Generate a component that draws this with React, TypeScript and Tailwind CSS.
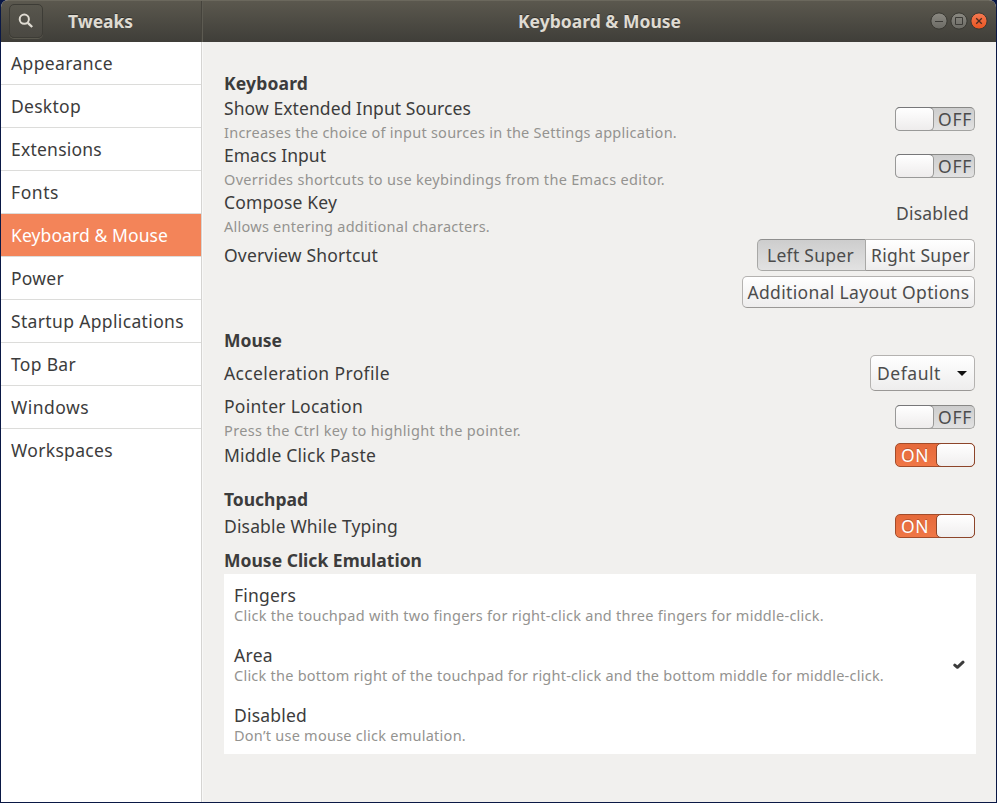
import { useLayoutEffect, useRef, useState } from "react";

/** Text run whose tracking is adjusted so that it fills `w` pixels. */
function Fit({ t, w, className = "" }: { t: string; w: number; className?: string }) {
  const ref = useRef<HTMLSpanElement>(null);
  const [spacing, setSpacing] = useState(0);
  useLayoutEffect(() => {
    if (!ref.current) return;
    const natural = ref.current.getBoundingClientRect().width;
    setSpacing((w - natural) / t.length);
  }, [t, w]);
  return (
    <span ref={ref} className={`inline-block whitespace-nowrap ${className}`} style={{ letterSpacing: spacing }}>
      {t}
    </span>
  );
}

const nav: [string, number][] = [
  ["Appearance", 102],
  ["Desktop", 70],
  ["Extensions", 91],
  ["Fonts", 48],
  ["Keyboard & Mouse", 157],
  ["Power", 53],
  ["Startup Applications", 173],
  ["Top Bar", 65],
  ["Windows", 78],
  ["Workspaces", 102],
];

function Switch({ on = false }: { on?: boolean }) {
  return on ? (
    <div className="flex h-6 w-20 shrink-0 rounded-[5px] border border-[#a34c2a] bg-linear-to-b from-[#e5693a] to-[#f07746]">
      <span className="flex w-10 items-center pt-px pl-[5px] text-[17.5px] leading-none text-white [text-shadow:0_-1px_#b9532c]">
        <Fit t="ON" w={28} />
      </span>
      <span className="-my-px -mr-px h-6 w-[39px] rounded-[5px] border border-[#8d452a] bg-linear-to-b from-white to-[#f0eeee]" />
    </div>
  ) : (
    <div className="flex h-6 w-20 shrink-0 rounded-[5px] border border-[#a3a3a1] border-t-[#888886] bg-linear-to-b from-[#cdcdcd] to-[#e2e2e2]">
      <span className="-my-px -ml-px h-6 w-[39px] rounded-[5px] border border-[#999998] border-t-[#777779] bg-linear-to-b from-white to-[#eeecec]" />
      <span className="flex flex-1 items-center pt-[2px] pl-[4px] text-[17.5px] leading-none text-[#4c4c4c]">
        <Fit t="OFF" w={34} />
      </span>
    </div>
  );
}

function Heading({ t, w, className }: { t: string; w: number; className: string }) {
  return (
    <h2 className={`flex items-center font-bold ${className}`}>
      <Fit t={t} w={w} />
    </h2>
  );
}

function Setting({ t, w, d, dw, children }: { t: string; w: number; d: string; dw: number; children: React.ReactNode }) {
  return (
    <div className="flex h-[47px] items-center justify-between">
      <div className="flex flex-col items-start pt-px">
        <Fit t={t} w={w} className="h-6 leading-6" />
        <Fit t={d} w={dw} className="h-[23px] text-[14.5px] leading-6 text-[#949390]" />
      </div>
      {children}
    </div>
  );
}

function Emulation({ t, w, d, dw, checked = false }: { t: string; w: number; d: string; dw: number; checked?: boolean }) {
  return (
    <div className="flex h-[60px] items-center justify-between pr-[11px] pl-[10px]">
      <div className="flex flex-col items-start pt-[2px]">
        <Fit t={t} w={w} className="h-[21px] leading-[21px]" />
        <Fit t={d} w={dw} className="h-[19px] text-[14.5px] leading-[19px] text-[#949390]" />
      </div>
      {checked && (
        <svg width="12" height="10" viewBox="0 0 12 10" className="mt-[2px]">
          <path d="M1.8 5.2 4.4 7.3 10 2.2" fill="none" stroke="#3c3c3c" strokeWidth="3" strokeLinecap="round" strokeLinejoin="round" />
        </svg>
      )}
    </div>
  );
}

const button = "flex items-center justify-center border bg-linear-to-b text-[#4c4c4c]";
const raised = "border-[#b4b2b0] border-b-[#9a9896] from-white to-[#eeeded]";
const pressed = "border-[#a8a8a6] border-t-[#8f8f8e] from-[#cdcdcd] to-[#e2e2e2]";

export default function App() {
  return (
    <div className="h-[803px] w-[997px] overflow-hidden bg-[#0a1845] px-px pb-px font-['Noto_Sans','Open_Sans',sans-serif] text-[17.5px] leading-6 text-[#3c3c3c]">
      <div className="flex h-full flex-col overflow-hidden rounded-t-[7px] bg-[#f1f0ee]">
        <header className="flex h-[42px] shrink-0 border-t border-[#6b685d] bg-linear-to-b from-[#5b584e] to-[#3f3e39] font-bold text-[#dfdbd2] [text-shadow:0_-1px_#33322e]">
          <div className="flex w-[201px] items-center border-r border-[#45433c] pb-[2px] pl-2">
            <button className="flex h-[34px] w-[34px] items-center justify-center rounded-[5px] border border-[#3d3c36] bg-linear-to-b from-[#58564d] to-[#4a4842] shadow-[0_1px_#5b594f]">
              <svg width="16" height="16" viewBox="0 0 16 16" fill="none" stroke="#dfdbd2">
                <circle cx="6.3" cy="6.2" r="4.6" strokeWidth="2" />
                <path d="m9.8 9.8 4.4 4.2" strokeWidth="2.4" />
              </svg>
            </button>
            <Fit t="Tweaks" w={65} className="ml-[25px]" />
          </div>
          <div className="flex flex-1 items-center border-l border-[#5d5b52] pb-[2px]">
            <div className="flex flex-1 justify-center">
              <Fit t="Keyboard & Mouse" w={163} />
            </div>
            <div className="-ml-[66px] flex gap-[2px] pr-[8px]">
              <svg width="18" height="18" viewBox="0 0 18 18">
                <defs>
                  <linearGradient id="gray" x2="0" y2="1"><stop stopColor="#8b8982" /><stop offset="1" stopColor="#6b6a64" /></linearGradient>
                  <linearGradient id="orange" x2="0" y2="1"><stop stopColor="#f47a53" /><stop offset="1" stopColor="#e95420" /></linearGradient>
                </defs>
                <circle cx="9" cy="9" r="8.1" fill="url(#gray)" stroke="#393832" />
                <path d="M5 9.5h8" stroke="#3c3b37" />
              </svg>
              <svg width="18" height="18" viewBox="0 0 18 18">
                <circle cx="9" cy="9" r="8.1" fill="url(#gray)" stroke="#393832" />
                <path d="M5.5 5.5h7v7h-7z" fill="none" stroke="#3c3b37" />
              </svg>
              <svg width="18" height="18" viewBox="0 0 18 18">
                <circle cx="9" cy="9" r="8.1" fill="url(#orange)" stroke="#393832" />
                <path d="m6.2 6.2 5.6 5.6m0-5.6-5.6 5.6" stroke="#4b2b20" strokeWidth="1.3" />
              </svg>
            </div>
          </div>
        </header>
        <div className="flex flex-1">
          <nav className="w-[201px] border-r border-[#d5d4d2] bg-white">
            {nav.map(([t, w], i) => (
              <div
                key={t}
                className={`flex items-center pl-[10px] ${i === 9 ? "h-[42px]" : "h-[43px] border-b border-[#dcdcda]"} ${i === 4 ? "bg-[#f38459] text-white" : ""}`}
              >
                <Fit t={t} w={w} />
              </div>
            ))}
          </nav>
          <main className="flex flex-1 flex-col border-l border-[#f8f8f7] pt-[29px] pr-[21px] pl-[21px]">
            <Heading t="Keyboard" w={84} className="h-6" />
            <Setting t="Show Extended Input Sources" w={247} d="Increases the choice of input sources in the Settings application." dw={453}>
              <Switch />
            </Setting>
            <Setting t="Emacs Input" w={102} d="Overrides shortcuts to use keybindings from the Emacs editor." dw={441}>
              <Switch />
            </Setting>
            <Setting t="Compose Key" w={113} d="Allows entering additional characters." dw={266}>
              <Fit t="Disabled" w={73} className="mr-[6px] text-[#4c4c4c]" />
            </Setting>
            <div className="mt-[3px] flex h-8 items-center justify-between">
              <Fit t="Overview Shortcut" w={154} />
              <div className="flex h-8">
                <button className={`${button} ${pressed} w-[109px] rounded-l-[5px] pr-[2px]`}>
                  <Fit t="Left Super" w={87} />
                </button>
                <button className={`${button} ${raised} w-[109px] rounded-r-[5px] border-l-0 pl-px`}>
                  <Fit t="Right Super" w={99} />
                </button>
              </div>
            </div>
            <button className={`${button} ${raised} mt-[5px] h-8 w-[233px] self-end rounded-[5px]`}>
              <Fit t="Additional Layout Options" w={222} />
            </button>
            <Heading t="Mouse" w={58} className="mt-5 h-6" />
            <div className="mt-[3px] flex h-9 items-center justify-between">
              <Fit t="Acceleration Profile" w={166} />
              <button className={`${button} ${raised} h-9 w-[105px] gap-[16px] rounded-[5px] pr-px`}>
                <Fit t="Default" w={64} />
                <svg width="10" height="5" viewBox="0 0 10 5"><path d="M0 0h10L5 5z" fill="#111" /></svg>
              </button>
            </div>
            <div className="mt-[2px] pb-px">
              <Setting t="Pointer Location" w={139} d="Press the Ctrl key to highlight the pointer." dw={297}>
                <Switch />
              </Setting>
            </div>
            <div className="mt-[2px] flex h-6 items-center justify-between">
              <Fit t="Middle Click Paste" w={152} />
              <Switch on />
            </div>
            <Heading t="Touchpad" w={84} className="mt-5 h-6" />
            <div className="mt-[3px] flex h-6 items-center justify-between">
              <Fit t="Disable While Typing" w={174} />
              <Switch on />
            </div>
            <Heading t="Mouse Click Emulation" w={198} className="mt-[10px] h-6" />
            <section className="mt-[2px] -mr-px bg-white">
              <Emulation t="Fingers" w={62} d="Click the touchpad with two fingers for right-click and three fingers for middle-click." dw={590} />
              <Emulation t="Area" w={39} d="Click the bottom right of the touchpad for right-click and the bottom middle for middle-click." dw={650} checked />
              <Emulation t="Disabled" w={73} d="Don’t use mouse click emulation." dw={232} />
            </section>
          </main>
        </div>
      </div>
    </div>
  );
}
